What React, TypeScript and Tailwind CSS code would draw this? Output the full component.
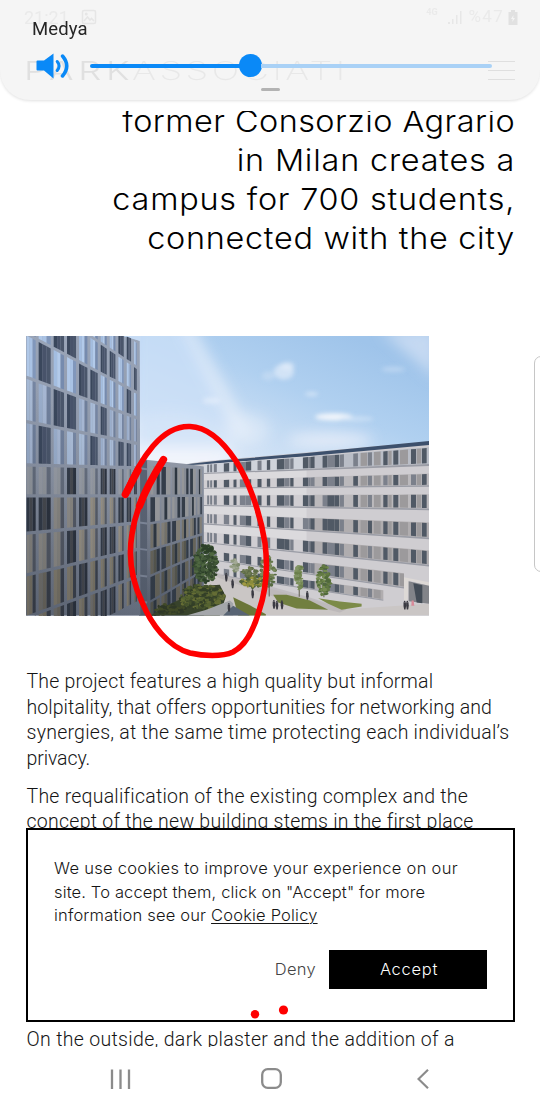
import React from "react";

type Pt = [number, number];

const lerp = (a: number, b: number, t: number) => a + (b - a) * t;
const noise = (n: number) => {
  const v = Math.sin(n * 127.1 + 11.7) * 43758.5453;
  return v - Math.floor(v);
};
const pts = (list: Pt[]) => list.map(([x, y]) => `${x.toFixed(1)},${y.toFixed(1)}`).join(" ");

type FacadeProps = {
  cols: number[];
  left: number[];
  right: number[];
  gapX: number;
  gapY: number;
  fill: (row: number, col: number) => string[];
};

/* A facade whose floor lines converge in perspective between its two side edges. */
function Facade({ cols, left, right, gapX, gapY, fill }: FacadeProps) {
  const x0 = cols[0];
  const x1 = cols[cols.length - 1];
  const yAt = (row: number, x: number) => lerp(left[row], right[row], (x - x0) / (x1 - x0));
  const out: React.ReactNode[] = [];
  for (let r = 0; r < left.length - 1; r++) {
    for (let c = 0; c < cols.length - 1; c++) {
      const a = cols[c];
      const b = cols[c + 1] - gapX;
      const shades = fill(r, c);
      shades.forEach((shade, i) => {
        const xa = lerp(a, b, i / shades.length);
        const xb = lerp(a, b, (i + 1) / shades.length);
        out.push(
          <polygon
            key={`${r}-${c}-${i}`}
            fill={shade}
            points={pts([
              [xa, yAt(r, xa) + gapY],
              [xb, yAt(r, xb) + gapY],
              [xb, yAt(r + 1, xb) - gapY],
              [xa, yAt(r + 1, xa) - gapY],
            ])}
          />
        );
      });
    }
  }
  return <g>{out}</g>;
}

const glassPattern = [
  "llllllllddl",
  "llddllddlld",
  "ldllddllldl",
  "llddlldllll",
  "ldllldllddl",
  "llldllddlld",
  "ddlldlllddl",
  "llldllddlll",
  "lllldllldll",
  "dlldllddlll",
];

function towerFill(r: number, c: number): string[] {
  const dark = glassPattern[r][c] === "d";
  const n = noise(r * 17 + c * 5);
  if (dark) return r < 5 ? ["#3a475c", "#48536a", "#4a566b"] : ["#333b48", "#474a50", "#2c333f"];
  if (r < 3) return n > 0.5 ? ["#b0c8e8", "#a9c2e4", "#8197bb"] : ["#a3bde0", "#b2caea", "#768bae"];
  if (r < 5) return n > 0.5 ? ["#a6bad6", "#a9bbd6", "#7585a2"] : ["#99adcb", "#a5b6d2", "#6f7f9b"];
  if (r === 5) return ["#979ca5", "#93989f", "#646d7d"];
  if (r < 8) return n > 0.4 ? ["#918f8b", "#8a8883", "#545a66"] : ["#989285", "#8e897f", "#565c67"];
  return n > 0.4 ? ["#878172", "#7e7869", "#3c424d"] : ["#777570", "#706c62", "#3a404b"];
}

function wingFill(r: number, c: number): string[] {
  const shade = r < 2 ? "#949699" : r < 3 ? "#827f77" : "#66645a";
  const shade2 = r < 2 ? "#868b94" : r < 3 ? "#74726a" : "#55564e";
  return (r + c) % 3 === 0 ? [shade, shade2, "#313a46"] : (r + c) % 3 === 1 ? ["#343d49", shade] : [shade2, "#2e3741", shade];
}

/* Window strips of the white building: y at the left end, y at the right end, heights. */
const strips = [
  { yl: 404, yr: 352, hl: 25, hr: 50, end: 1227 },
  { yl: 451, yr: 431, hl: 23, hr: 35, end: 1227 },
  { yl: 496, yr: 493, hl: 29, hr: 43, end: 1227 },
  { yl: 551, yr: 578, hl: 29, hr: 45, end: 1227 },
  { yl: 606, yr: 662, hl: 30, hr: 43, end: 1227 },
  { yl: 661, yr: 739, hl: 24, hr: 43, end: 1152 },
  { yl: 708, yr: 800, hl: 20, hr: 30, end: 1090 },
];

/* Window groups shared by every floor: start, width, tone. */
const windows: [number, number, string][] = [
  [562, 6, "m"], [571, 6, "m"], [582, 9, "m"], [612, 16, "d"], [641, 9, "d"], [660, 17, "m"], [677, 17, "d"],
  [713, 12, "d"], [741, 10, "d"], [771, 22, "d"], [793, 16, "m"], [811, 10, "d"], [849, 16, "d"], [865, 6, "m"], [871, 13, "d"],
  [908, 14, "d"], [922, 22, "m"], [944, 14, "d"], [960, 12, "m"], [1000, 14, "d"], [1022, 20, "l"], [1044, 12, "m"],
  [1062, 20, "l"], [1090, 13, "d"], [1105, 10, "l"], [1120, 15, "d"], [1140, 24, "l"], [1173, 15, "d"], [1190, 14, "l"], [1206, 14, "d"],
];
const tones: Record<string, string> = { d: "#505965", m: "#7b808b", l: "#9c9a9c" };

function WhiteBuilding() {
  const at = (a: number, b: number, x: number) => lerp(a, b, (x - 552) / 675);
  const nodes: React.ReactNode[] = [];
  strips.forEach((s, r) => {
    const quad = (xa: number, xb: number, fill: string, key: string, top = 0, bottom = 1) => {
      const p = (x: number, t: number): Pt => [x, at(s.yl, s.yr, x) + at(s.hl, s.hr, x) * t];
      nodes.push(<polygon key={key} fill={fill} points={pts([p(xa, top), p(xb, top), p(xb, bottom), p(xa, bottom)])} />);
    };
    quad(552, 880, r === 0 ? "#cfd3db" : "#d0ced2", `${r}-band-l`);
    quad(880, s.end, r === 0 ? "#b9bdc6" : r < 3 ? "#bbb9bc" : "#b0adaf", `${r}-band-r`);
    quad(552, s.end, "#9b9da6", `${r}-sill`, 1, 1.12);
    windows.forEach(([x, w, tone], i) => {
      if (x >= s.end) return;
      const n = noise(r * 31 + i * 7);
      const key = n > 0.82 && tone === "d" ? "m" : n < 0.12 && tone === "m" ? "d" : tone;
      quad(x, Math.min(x + w, s.end), tones[key], `${r}-${i}`, 0.04, 0.96);
    });
  });
  return (
    <g>
      <polygon fill="#cfcdd1" points="500,402 552,394 1227,335 1227,857 540,857 540,640" />
      <polygon fill="#e2e0e4" points="552,404 860,377 860,670 552,640" opacity="0.65" />
      <polygon fill="#3d506c" points="500,403 600,392 860,369 1227,333 1227,345 860,379 600,399 552,403 500,406" />
      {nodes}
    </g>
  );
}

function Foliage({ x, y, w, h, n, seed, shades }: { x: number; y: number; w: number; h: number; n: number; seed: number; shades: string[] }) {
  return (
    <g>
      {Array.from({ length: n }, (_, i) => {
        const a = noise(seed + i) * Math.PI * 2;
        const d = Math.sqrt(noise(seed + i * 3 + 50));
        return (
          <ellipse
            key={i}
            cx={x + Math.cos(a) * d * w}
            cy={y + Math.sin(a) * d * h}
            rx={3 + noise(seed + i * 5) * 5}
            ry={2 + noise(seed + i * 9) * 4}
            fill={shades[i % shades.length]}
          />
        );
      })}
    </g>
  );
}

const people: Pt[] = [
  [638, 762], [619, 742], [698, 792], [627, 833], [762, 824], [771, 826], [786, 825], [862, 797], [1154, 826], [1162, 826],
];

function Photo() {
  return (
    <svg className="block h-[279.5px] w-[403px]" viewBox="19 18 1208 839" preserveAspectRatio="none" role="img">
      <defs>
        <linearGradient id="sky" x1="0.8" y1="0" x2="0.5" y2="0.5">
          <stop offset="0" stopColor="#9fc4ea" />
          <stop offset="0.4" stopColor="#b0d0f0" />
          <stop offset="0.8" stopColor="#cfe1f5" />
          <stop offset="1" stopColor="#e4edf9" />
        </linearGradient>
        <linearGradient id="tower" x1="0" y1="0" x2="0" y2="1">
          <stop offset="0" stopColor="#9aa5b8" />
          <stop offset="0.5" stopColor="#8b94a5" />
          <stop offset="1" stopColor="#6d7687" />
        </linearGradient>
        <linearGradient id="wing" x1="0" y1="0" x2="0" y2="1">
          <stop offset="0" stopColor="#9299a7" />
          <stop offset="1" stopColor="#586171" />
        </linearGradient>
        <linearGradient id="shade" x1="0" y1="1" x2="0.4" y2="0.4">
          <stop offset="0" stopColor="#12161e" stopOpacity="0.22" />
          <stop offset="1" stopColor="#12161e" stopOpacity="0" />
        </linearGradient>
        <filter id="haze" x="-50%" y="-50%" width="200%" height="200%">
          <feGaussianBlur stdDeviation="20" />
        </filter>
        <filter id="cloud" x="-50%" y="-50%" width="200%" height="200%">
          <feGaussianBlur stdDeviation="7" />
        </filter>
      </defs>
      <rect x="18" y="18" width="1210" height="840" fill="url(#sky)" />
      <g filter="url(#haze)">
        <ellipse cx="450" cy="360" rx="190" ry="110" fill="#f3f6fd" opacity="0.85" />
        <path d="M340 -40L480 -40L660 350L340 350Z" fill="#cbdff7" opacity="0.75" />
        <path d="M480 -20L515 -20L700 320L650 320Z" fill="#eaf1fb" opacity="0.7" />
        <path d="M1080 0L1250 0L1250 150Z" fill="#dfe8f6" opacity="0.6" />
        <ellipse cx="930" cy="332" rx="130" ry="24" fill="#e9eff9" opacity="0.85" />
        <ellipse cx="680" cy="300" rx="70" ry="50" fill="#e6eefa" opacity="0.55" />
      </g>
      <g filter="url(#cloud)">
        <ellipse cx="792" cy="125" rx="30" ry="24" fill="#dde9f8" opacity="0.75" />
        <ellipse cx="803" cy="108" rx="20" ry="12" fill="#e6effa" opacity="0.6" />
        <ellipse cx="745" cy="138" rx="20" ry="14" fill="#cfe1f5" opacity="0.5" />
        <ellipse cx="942" cy="261" rx="56" ry="11" fill="#f1f5fb" />
        <ellipse cx="1010" cy="267" rx="50" ry="8" fill="#d3e4f6" opacity="0.7" />
        <ellipse cx="875" cy="192" rx="20" ry="6" fill="#d9e7f7" opacity="0.8" />
        <ellipse cx="575" cy="212" rx="28" ry="10" fill="#e8f0fb" opacity="0.6" />
        <ellipse cx="1120" cy="118" rx="36" ry="8" fill="#cbdff5" opacity="0.6" />
      </g>

      <WhiteBuilding />

      <polygon fill="#cac6c5" points="540,700 600,735 800,790 980,838 1227,822 1227,857 540,857" />
      <polygon fill="#a9a6a9" points="552,720 700,755 860,800 980,838 960,848 760,800 600,745" opacity="0.4" />
      <polygon fill="#6b7638" points="640,802 690,826 738,853 738,857 655,857" />
      <polygon fill="#717f40" points="760,795 800,795 870,812 925,840 830,836 775,818" />
      <polygon fill="#7c8b48" points="895,805 960,815 1025,822 1025,830 965,840 925,822" />
      <polygon fill="#ddd9d6" points="1152,742 1227,757 1227,768 1166,752 1163,812 1152,812" />
      <polygon fill="#828489" points="1166,754 1227,768 1227,822 1166,814" />
      <polygon fill="#434c56" points="1168,757 1207,766 1207,820 1190,818 1180,760" />
      <Foliage x={700} y={755} w={36} h={17} n={70} seed={3} shades={["#6b7539", "#8b8c3c", "#4f6037", "#a39b42"]} />
      <Foliage x={645} y={706} w={14} h={18} n={26} seed={8} shades={["#7f8b6d", "#929c80", "#a3a996"]} />
      <Foliage x={690} y={725} w={24} h={14} n={30} seed={13} shades={["#5d6b47", "#6f7b52"]} />
      <Foliage x={745} y={725} w={23} h={50} n={80} seed={21} shades={["#66784c", "#566a42", "#7b8a5c"]} />
      <path d="M838 765v36M912 770v32M748 750v50" stroke="#5d5a4c" strokeWidth="3" />
      <Foliage x={838} y={742} w={11} h={38} n={50} seed={41} shades={["#6a7e4b", "#819463", "#768a56"]} />
      <Foliage x={912} y={752} w={20} h={44} n={90} seed={61} shades={["#637a43", "#768c52", "#516a3c"]} />

      <polygon fill="url(#wing)" points="358,385 385,390 500,402 552,410 552,857 358,857" />
      <polygon fill="#596272" points="358,388 382,392 382,857 358,857" />
      {[415, 500, 578, 657, 737, 815].map((y) => (
        <path key={y} d={`M358 ${y}L382 ${y + 3}`} stroke="#7d8698" strokeWidth="6" />
      ))}
      <Facade
        cols={[392, 425, 457, 486, 511, 533, 551]}
        left={[404, 498, 580, 660, 738, 815, 890]}
        right={[415, 497, 556, 612, 668, 722, 780]}
        gapX={5}
        gapY={4}
        fill={wingFill}
      />

      <polygon fill="url(#tower)" points="18,18 308,18 360,32 362,857 18,857" />
      <Facade
        cols={[21, 57, 102, 142, 178, 212, 243, 270, 296, 321, 343, 360]}
        left={[-240, -110, 12, 142, 275, 405, 498, 610, 735, 862, 990]}
        right={[42, 118, 192, 267, 342, 414, 498, 578, 657, 737, 815]}
        gapX={9}
        gapY={5}
        fill={towerFill}
      />
      <polygon fill="#c7dcf5" points="312,17 364,17 364,34" />
      <rect x="18" y="18" width="540" height="840" fill="url(#shade)" />

      <polygon fill="#38432b" points="392,857 440,828 500,800 520,770 600,765 618,800 600,857" />
      <Foliage x={545} y={802} w={68} h={38} n={240} seed={90} shades={["#45522d", "#566332", "#333f27", "#656d35"]} />
      <Foliage x={450} y={838} w={45} h={14} n={60} seed={140} shades={["#2f3827", "#414a28"]} />
      <Foliage x={558} y={703} w={35} h={58} n={260} seed={200} shades={["#374b31", "#425839", "#2d4029", "#4f6741"]} />
      <polygon fill="#a4a6aa" points="500,857 560,840 630,812 640,820 640,857" />
      <polygon fill="#586474" points="610,857 640,828 690,857" />
      {people.map(([x, y]) => (
        <g key={`${x}-${y}`} fill="#3a3a42">
          <circle cx={x} cy={y - 11} r="2.5" />
          <path d={`M${x - 3.5} ${y - 9}h7l1 11l-2 11h-4l-2-11z`} />
        </g>
      ))}
      <path d="M1175 812h6l2 16h-9z" fill="#d98a98" />
    </svg>
  );
}

function VolumePanel() {
  return (
    <header className="absolute inset-x-0 top-0 h-[100px] overflow-hidden rounded-b-[30px] bg-[#f5f5f5] shadow-[0_1px_3px_rgba(0,0,0,0.12)]">
      <div className="absolute inset-x-0 top-[7px] flex h-5 items-center justify-between pr-[22px] pl-6 font-['Roboto',sans-serif] text-[17px] text-[#eaeaea]">
        <div className="flex items-center gap-[12px]">
          <span className="text-[18px]">21:21</span>
          <svg className="size-4" viewBox="0 0 16 16" fill="none" stroke="#e6e6e6" strokeWidth="1.6">
            <rect x="1.5" y="1.5" width="13" height="13" rx="1.5" />
            <path d="M3 12l3.5-4 2.5 3 1.500-1.500L13 12" />
            <circle cx="5.200" cy="5" r="0.700" />
          </svg>
        </div>
        <div className="flex items-center">
          <span className="-mt-2 text-[9px] font-bold">4G</span>
          <svg className="ml-[9px] h-4 w-4" viewBox="0 0 16 16" fill="#e7e7e7">
            <path d="M1 13h2v2H1zM5 10h1.500v5H5zM9 6h1.500v9H9zM13 2h1.500v13H13z" />
          </svg>
          <span className="ml-[6px] tracking-[1.300px]">%47</span>
          <svg className="ml-[4px] h-[15px] w-[10px]" viewBox="0 0 10 15" fill="#e1e1e1">
            <path d="M3 0h4v2h2.500v13h-9V2H3z" />
            <path d="M5.500 5L3 9h1.700L4.200 12 7 8H5.200z" fill="#f5f5f5" />
          </svg>
        </div>
      </div>
      <div className="absolute top-[54.500px] left-[24px] flex h-8 items-center font-['Inter',sans-serif] text-[26px]">
        <span className="w-[108px] origin-left scale-x-[1.4] font-light tracking-[3.4px] text-[#e0e0e0]">PARK</span>
        <span className="origin-left scale-x-[1.4] font-extralight tracking-[2.5px] text-[#e8e8e8]">ASSOCIATI</span>
      </div>
      <div className="absolute top-[61px] left-[488px] flex w-[27px] flex-col gap-2">
        <i className="h-px bg-[#dfdfdf]" />
        <i className="h-px bg-[#dfdfdf]" />
        <i className="h-px bg-[#dfdfdf]" />
      </div>
      <div className="relative pt-[18px] pl-8">
        <p className="font-['Roboto',sans-serif] text-[18.500px] leading-[23px] tracking-[0.1px] text-[#252525]">Medya</p>
      </div>
      <div className="relative mt-[7px] flex h-[35px] items-center pl-9">
        <svg className="h-7 w-[34px] shrink-0" viewBox="0 0 34 28" fill="none">
          <path d="M0.500 9.500Q0.500 8.500 1.500 8.500H8L17.500 1.500V26.500L8 18.500H1.500Q0.500 18.500 0.500 17.500Z" fill="#0a89f7" />
          <path d="M21.200 9.500Q25 14 21.200 18.500" stroke="#0a89f7" strokeWidth="3" strokeLinecap="round" />
          <path d="M26.500 4Q35 14 26.500 24" stroke="#0a89f7" strokeWidth="3.500" strokeLinecap="round" />
        </svg>
        <div className="ml-5 flex h-6 w-[402px] items-center">
          <div className="h-1 w-[150px] rounded-l-full bg-[#0a89f7]" />
          <div className="-ml-[1px] size-[23px] shrink-0 rounded-full bg-[#0a89f7]" />
          <div className="-ml-px h-1 flex-1 rounded-r-full bg-[#a9d1f6]" />
        </div>
      </div>
      <div className="absolute top-[88px] left-[261px] h-[3px] w-[19px] rounded-full bg-[#b3b3b3]" />
    </header>
  );
}

export default function App() {
  return (
    <div className="relative flex h-[1110px] w-[540px] flex-col overflow-hidden bg-white text-black">
      <main className="mt-[111px] h-[936px] overflow-hidden pr-[26px] pl-[26px]">
        <h1 className="-mt-[9.300px] flex origin-right scale-x-[1.080] flex-col items-end font-['Inter',sans-serif] text-[30px] leading-[39px] font-[270] whitespace-nowrap">
          <span className="-mr-[1px] tracking-[0.430px]">former Consorzio Agrario</span>
          <span className="-mr-[1px] tracking-[0.740px]">in Milan creates a</span>
          <span className="-mr-[1px] tracking-[0.720px]">campus for 700 students,</span>
          <span className="-mr-[1px] tracking-[0.650px]">connected with the city</span>
        </h1>
        <div className="mt-[78.300px]">
          <Photo />
        </div>
        <div className="mt-[53.500px] flex flex-col pl-[0.500px] font-['Roboto',sans-serif] text-[19.500px] leading-[25.600px] font-[350] whitespace-nowrap text-[#151515]">
          <p className="flex flex-col">
            <span className="tracking-[0.200px]">The project features a high quality but informal</span>
            <span className="tracking-[0.070px]">holpitality, that offers opportunities for networking and</span>
            <span className="tracking-[0.250px]">synergies, at the same time protecting each individual’s</span>
            <span className="tracking-[-0.100px]">privacy.</span>
          </p>
          <p className="mt-[12.500px] flex flex-col">
            <span className="tracking-[0.240px]">The requalification of the existing complex and the</span>
            <span className="tracking-[0.260px]">concept of the new building stems in the first place</span>
          </p>
          <p className="mt-[192px]">
            <span className="tracking-[0.320px]">On the outside, dark plaster and the addition of a</span>
          </p>
        </div>
      </main>

      <nav className="flex h-[63px] items-center bg-white text-[#8b8b8b]">
        <svg className="ml-[110px] h-5 w-[21px]" viewBox="0 0 21 20" stroke="currentColor" strokeWidth="2.300">
          <path d="M2 0.500V20M10.500 0.500V20M19 0.500V20" />
        </svg>
        <svg className="ml-[130px] size-[21px]" viewBox="0 0 21 21" fill="none" stroke="currentColor" strokeWidth="2.300">
          <rect x="1.200" y="1.200" width="18.600" height="18.600" rx="5.500" />
        </svg>
        <svg className="ml-[135px] h-5 w-3" viewBox="0 0 12 20" fill="none" stroke="currentColor" strokeWidth="2.200">
          <path d="M11 0.800L1.500 10L11 19.200" />
        </svg>
      </nav>

      <section className="absolute top-[828px] left-[26px] flex h-[194px] w-[489px] flex-col border-2 border-black bg-white pt-[27px] pr-[26px] pl-[26px] font-['Inter',sans-serif] text-[16.500px] leading-[23.500px] font-light text-[#151515]">
        <p className="flex flex-col whitespace-nowrap">
          <span className="tracking-[0.290px]">We use cookies to improve your experience on our</span>
          <span className="tracking-[0.140px]">site. To accept them, click on "Accept" for more</span>
          <span className="tracking-[0.180px]">
            information see our <a className="underline decoration-1 underline-offset-[2px]">Cookie Policy</a>
          </span>
        </p>
        <div className="mt-[22.500px] flex h-[39px] items-center justify-end">
          <button className="mt-px mr-[13px] tracking-[0.310px] text-[#444]">Deny</button>
          <button className="h-[39px] w-[158px] bg-black pt-px pl-[2px] tracking-[0.720px] text-white">Accept</button>
        </div>
      </section>

      <aside className="absolute top-[356px] left-[534px] h-[216px] w-3 rounded-l-[7px] border border-[#c6c6c6] bg-white" />

      <svg className="pointer-events-none absolute inset-0 h-[1110px] w-[540px]" viewBox="0 0 540 1110" fill="none">
        <path
          d="M125.300 494.500C132 478 141 460 153 446C165 432 177 426 190 426.500C209 427 224 443 236 461C248 480 260 511 265 543C268 567 267 588 259 611C253 632 245 646 233 652C222 657 203 656 190 653C168 647 151 624 142 602C132 581 128 558 132 534C136 506 149 483 163.500 459.500"
          stroke="#fe0000"
          strokeWidth="5.600"
          strokeLinecap="round"
          strokeLinejoin="round"
        />
        <path d="M125.300 494.500L138 470M163.500 459.500C155 473 146 488 139.500 506" stroke="#fe0000" strokeWidth="7.300" strokeLinecap="round" />
        <circle cx="255" cy="1014.300" r="4.200" fill="#fe0000" />
        <circle cx="283.500" cy="1010" r="4.600" fill="#fe0000" />
      </svg>

      <VolumePanel />
    </div>
  );
}
